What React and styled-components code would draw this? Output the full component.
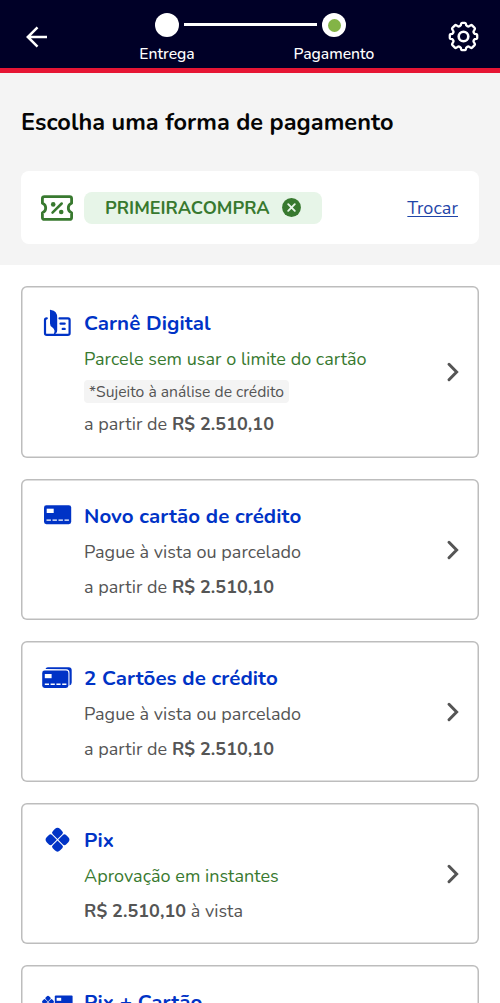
import React from "react"
import styled, { createGlobalStyle, ThemeProvider } from "styled-components"

const theme = {
  navy: "#000027",
  red: "#e61534",
  lightGray: "#f4f4f4",
  border: "#bdbdbd",
  text: "#555555",
  blue: "#0033c6",
  link: "#1f45a8",
  green: "#38792f",
  paleGreen: "#e7f5e8",
}

const GlobalStyle = createGlobalStyle`
  * {
    box-sizing: border-box;
  }
  body {
    margin: 0;
    background: white;
    font-family: Nunito, Lato, "Open Sans", sans-serif;
  }
`

const Page = styled.div`
  height: 1003px;
  overflow: hidden;
`

const Header = styled.header`
  display: flex;
  justify-content: space-between;
  height: 73px;
  padding: 0 21px 0 26px;
  background: ${({ theme }) => theme.navy};
  border-bottom: 5px solid ${({ theme }) => theme.red};
`

const IconButton = styled.button`
  display: flex;
  align-items: center;
  height: 73px;
  padding: 0;
  border: 0;
  background: none;
  color: white;
`

const Stepper = styled.div`
  display: flex;
  justify-content: center;
  margin-left: 5px;
  padding-top: 13px;
`

const Step = styled.div`
  display: flex;
  flex-direction: column;
  align-items: center;
  width: 90px;
`

const StepDot = styled.span`
  display: flex;
  align-items: center;
  justify-content: center;
  width: 24px;
  height: 24px;
  border-radius: 50%;
  background: white;
  &::after {
    content: "";
    width: 13px;
    height: 13px;
    border-radius: 50%;
    background: ${({ $active }) => ($active ? "#83b446" : "white")};
  }
`

const StepLabel = styled.span`
  margin-top: 7px;
  font-size: 15.7px;
  line-height: 20px;
  font-weight: 500;
  color: white;
`

const StepLine = styled.div`
  width: 133px;
  height: 3px;
  margin: 10px -28px 0;
  background: white;
`

const Top = styled.section`
  height: 192px;
  padding: 34px 21px 0;
  background: ${({ theme }) => theme.lightGray};
`

const Heading = styled.h1`
  margin: 0 0 34px;
  font-size: 23.5px;
  line-height: 30px;
  font-weight: 700;
  letter-spacing: 0.04px;
  white-space: nowrap;
  color: #050505;
`

const Coupon = styled.div`
  display: flex;
  align-items: center;
  height: 73px;
  padding: 0 21px 0 20px;
  border-radius: 8px;
  background: white;
`

const CouponTag = styled.div`
  display: flex;
  align-items: center;
  justify-content: space-between;
  width: 238px;
  height: 32px;
  margin-left: 11px;
  padding: 0 21px;
  border-radius: 8px;
  background: ${({ theme }) => theme.paleGreen};
  color: ${({ theme }) => theme.green};
  font-size: 18px;
  font-weight: 700;
`

const ChangeLink = styled.a`
  margin-left: auto;
  font-size: 18px;
  letter-spacing: 0.1px;
  text-decoration: underline;
  text-decoration-thickness: 1px;
  text-underline-offset: 2px;
  color: ${({ theme }) => theme.link};
`

const Methods = styled.main`
  display: flex;
  flex-direction: column;
  gap: 21px;
  padding: 21px 21px 0;
`

const Card = styled.article`
  display: flex;
  align-items: center;
  flex-shrink: 0;
  height: ${({ $tall }) => ($tall ? "172px" : "141px")};
  padding: 1px 18px 1px 1px;
  box-shadow: inset 0 0 0 1.5px ${({ theme }) => theme.border};
  border-radius: 6px;
`

const CardIcon = styled.div`
  display: flex;
  align-self: flex-start;
  width: 62px;
  padding: 22px 0 0 20px;
`

const CardBody = styled.div`
  flex: 1;
  align-self: flex-start;
  padding-top: 22px;
  white-space: nowrap;
`

const CardTitle = styled.h2`
  margin: 0;
  font-size: 20.5px;
  line-height: 28px;
  font-weight: 700;
  letter-spacing: 0.08px;
  color: ${({ theme }) => theme.blue};
`

const Line = styled.p`
  margin: 8px 0 0;
  font-size: 18px;
  line-height: 27px;
  letter-spacing: 0.03px;
  color: ${({ theme, $green }) => ($green ? theme.green : theme.text)};
  ${CardTitle} + & {
    margin-top: 9px;
  }
`

const Note = styled.div`
  width: 205px;
  height: 23px;
  margin: 7px 0 0;
  padding-left: 5px;
  border-radius: 4px;
  background: ${({ theme }) => theme.lightGray};
  color: ${({ theme }) => theme.text};
  font-size: 15.7px;
  line-height: 24px;
`

const ArrowLeft = () => (
  <svg width="22" height="22" viewBox="0 0 22 22" fill="none" stroke="currentColor" strokeWidth="2.5">
    <path d="M21 11H2M11.5 1.3L1.8 11l9.7 9.7" />
  </svg>
)

const Gear = () => (
  <svg width="31" height="31" viewBox="0 0 31 31" fill="none" stroke="currentColor" strokeLinejoin="round">
    <path
      strokeWidth="2.3"
      d="M13.2 2.5Q13.4 1.8 14.1 1.8H16.9Q17.6 1.8 17.8 2.5L18.2 4.3Q19.9 6.2 21.4 5.1L22.7 4.2Q23.5 3.8 24.1 4.4L26.6 6.9Q27.2 7.5 26.8 8.3L25.9 9.6Q24.8 11.1 26.7 12.8L28.5 13.2Q29.2 13.4 29.2 14.1V16.9Q29.2 17.6 28.5 17.8L26.7 18.2Q24.8 19.9 25.9 21.4L26.8 22.7Q27.2 23.5 26.6 24.1L24.1 26.6Q23.5 27.2 22.7 26.8L21.4 25.9Q19.9 24.8 18.2 26.7L17.8 28.5Q17.6 29.2 16.9 29.2H14.1Q13.4 29.2 13.2 28.5L12.8 26.7Q11.1 24.8 9.6 25.9L8.3 26.8Q7.5 27.2 6.9 26.6L4.4 24.1Q3.8 23.5 4.2 22.7L5.1 21.4Q6.2 19.9 4.3 18.2L2.5 17.8Q1.8 17.6 1.8 16.9V14.1Q1.8 13.4 2.5 13.2L4.3 12.8Q6.2 11.1 5.1 9.6L4.2 8.3Q3.8 7.5 4.4 6.9L6.9 4.4Q7.5 3.8 8.3 4.2L9.6 5.1Q11.1 6.2 12.8 4.3Z"
    />
    <circle cx="15.5" cy="15.5" r="4.8" strokeWidth="2.6" />
  </svg>
)

const Ticket = () => (
  <svg width="32" height="26" viewBox="0 0 32 26" fill="none" stroke="#38792f" strokeWidth="2.8" strokeLinecap="round" strokeLinejoin="round">
    <path d="M3.4 1.6H28.6Q30.6 1.6 30.6 3.6V8.2Q27.3 9.5 27.3 13T30.6 17.8V22.4Q30.6 24.4 28.6 24.4H3.4Q1.4 24.4 1.4 22.4V17.8Q4.7 16.5 4.7 13T1.4 8.2V3.6Q1.4 1.6 3.4 1.6Z" />
    <path d="M11.5 17.7L20.7 8.5" strokeWidth="2.5" />
    <circle cx="12.2" cy="9.4" r="2.3" fill="#38792f" stroke="none" />
    <circle cx="20.2" cy="17" r="2.3" fill="#38792f" stroke="none" />
  </svg>
)

const Remove = () => (
  <svg width="19" height="19" viewBox="0 0 19 19">
    <circle cx="9.5" cy="9.5" r="9.4" fill="#38792f" />
    <path d="M6.2 6.2l6.6 6.6M12.8 6.2l-6.6 6.6" stroke="#e7f5e8" strokeWidth="1.9" strokeLinecap="round" />
  </svg>
)

const Chevron = () => (
  <svg width="16" height="20" viewBox="0 0 16 20" fill="none" stroke="#555" strokeWidth="3" strokeLinecap="round">
    <path d="M4 2.3l7.6 7.7L4 17.7" />
  </svg>
)

const Booklet = () => (
  <svg width="31" height="30" viewBox="0 0 31 30" fill="none" stroke="#0033c6" strokeWidth="2.2" strokeLinecap="round" strokeLinejoin="round">
    <path d="M4.8 9.3Q3 9.3 3 11V24.3Q3 25.9 4.8 25.9H25.8Q27.6 25.9 27.6 24.3V11Q27.6 9.4 26 9.4H17.5" />
    <path d="M8 2.2Q7.4 .6 9 .9Q15.2 1.8 15.2 8.4V21.2Q15.2 24.6 11.6 25.8Q14 21 10.2 18.3Q8 17 8 14.5Z" fill="#0033c6" stroke="none" />
    <path d="M18.6 14.6H22.6M20.8 19.9H22.6" strokeWidth="2.4" />
  </svg>
)

const CreditCard = () => (
  <svg width="31" height="24" viewBox="0 0 31 24">
    <rect x="2" y="3.2" width="27.2" height="19" rx="2.4" fill="#0033c6" />
    <rect x="4.7" y="6.7" width="7" height="4.3" fill="white" />
    <path d="M4.5 18.1H27.5" stroke="white" strokeWidth="1.4" strokeDasharray="4.4 1.6" />
  </svg>
)

const TwoCards = () => (
  <svg width="32" height="26" viewBox="0 0 32 26">
    <path d="M3.5 5Q4 3.3 5.8 3.3H26.8Q29.7 3.3 29.7 6.2V18.5Q29.7 21 27.5 21.4V9Q27.5 5.3 24.2 5.3Z" fill="#0033c6" />
    <rect x="0.2" y="6.5" width="26.2" height="17.5" rx="2.4" fill="#0033c6" />
    <rect x="2.8" y="10" width="6.8" height="4.2" fill="white" />
    <path d="M2.8 20.2H25" stroke="white" strokeWidth="1.4" strokeDasharray="4.2 1.6" />
  </svg>
)

const PixShape = () => (
  <g fill="#0033c6">
    {[45, 135, 225, 315].map(angle => (
      <path
        key={angle}
        transform={`translate(12 12) rotate(${angle})`}
        d="M.5 .5H7.2Q9.4 .5 9.4 2.7V5.6Q9.4 9.4 5.6 9.4H2.7Q.5 9.4 .5 7.2Z"
      />
    ))}
  </g>
)

const Pix = () => (
  <svg width="31" height="30" viewBox="0 0 31 30">
    <g transform="translate(3.5 1.7)">
      <PixShape />
    </g>
  </svg>
)

const PixCard = () => (
  <svg width="32" height="26" viewBox="0 0 32 26">
    <g transform="translate(0 7.8) scale(.5)">
      <PixShape />
    </g>
    <rect x="12.8" y="7.6" width="17.8" height="13" rx="1" fill="#0033c6" />
    <rect x="14.6" y="9.8" width="4.6" height="3" fill="white" />
  </svg>
)

const methods = [
  {
    icon: <Booklet />,
    title: "Carnê Digital",
    text: "Parcele sem usar o limite do cartão",
    green: true,
    note: "*Sujeito à análise de crédito",
  },
  { icon: <CreditCard />, title: "Novo cartão de crédito", text: "Pague à vista ou parcelado" },
  { icon: <TwoCards />, title: "2 Cartões de crédito", text: "Pague à vista ou parcelado" },
  { icon: <Pix />, title: "Pix", text: "Aprovação em instantes", green: true, cash: true },
  { icon: <PixCard />, title: "Pix + Cartão" },
]

const MethodCard = ({ icon, title, text, green, note, cash }) => {
  return (
    <Card $tall={!!note}>
      <CardIcon>{icon}</CardIcon>
      <CardBody>
        <CardTitle>{title}</CardTitle>
        {text && <Line $green={green}>{text}</Line>}
        {note && <Note>{note}</Note>}
        {text && (
          <Line>
            {!cash && "a partir de "}
            <b>R$ 2.510,10</b>
            {cash && " à vista"}
          </Line>
        )}
      </CardBody>
      <Chevron />
    </Card>
  )
}

const App = () => {
  return (
    <ThemeProvider theme={theme}>
      <GlobalStyle />
      <Page>
        <Header>
          <IconButton aria-label="Voltar">
            <ArrowLeft />
          </IconButton>
          <Stepper>
            <Step>
              <StepDot />
              <StepLabel>Entrega</StepLabel>
            </Step>
            <StepLine />
            <Step>
              <StepDot $active />
              <StepLabel>Pagamento</StepLabel>
            </Step>
          </Stepper>
          <IconButton aria-label="Ajustes">
            <Gear />
          </IconButton>
        </Header>
        <Top>
          <Heading>Escolha uma forma de pagamento</Heading>
          <Coupon>
            <Ticket />
            <CouponTag>
              PRIMEIRACOMPRA
              <Remove />
            </CouponTag>
            <ChangeLink>Trocar</ChangeLink>
          </Coupon>
        </Top>
        <Methods>
          {methods.map(method => (
            <MethodCard key={method.title} {...method} />
          ))}
        </Methods>
      </Page>
    </ThemeProvider>
  )
}

export default App
